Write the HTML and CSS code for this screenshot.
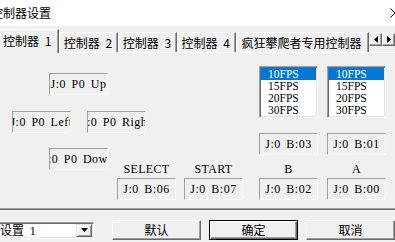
FILE: index.html
```html
<!DOCTYPE html>
<html lang="zh">
<head>
    <meta charset="UTF-8">
    <title>控制器设置</title>
    <link rel="stylesheet" href="styles.css">
</head>
<body>
    <div class="titlebar">
        <span class="title">控制器设置</span>
        <svg class="close" width="10" height="10" viewBox="0 0 10 10">
            <path d="M0.5 0.5 L9.5 9.5 M9.5 0.5 L0.5 9.5" stroke="#000" stroke-width="1"/>
        </svg>
    </div>

    <!-- Tabs -->
    <div class="tabs">
        <div class="tab tab-active tab-1">控制器 1</div>
        <div class="tab tab-2">控制器 2</div>
        <div class="tab tab-3">控制器 3</div>
        <div class="tab tab-4">控制器 4</div>
        <div class="tab tab-5">疯狂攀爬者专用控制器</div>
        <div class="spin">
            <span class="spin-btn">
                <svg width="4" height="7" viewBox="0 0 4 7"><path d="M4 0 L0 3.5 L4 7 Z" fill="#000"/></svg>
            </span>
            <span class="spin-btn">
                <svg width="4" height="7" viewBox="0 0 4 7"><path d="M0 0 L4 3.5 L0 7 Z" fill="#000"/></svg>
            </span>
        </div>
    </div>

    <div class="panel">
        <div class="dpad">
            <div class="box box-up">J:0 P0 Up</div>
            <div class="dpad-row">
                <div class="box">J:0 P0 Left</div>
                <div class="box">J:0 P0 Right</div>
            </div>
            <div class="box box-down">J:0 P0 Down</div>
        </div>

        <div class="group group-mid">
            <div class="col">
                <div class="label">SELECT</div>
                <div class="box">J:0 B:06</div>
            </div>
            <div class="col">
                <div class="label">START</div>
                <div class="box">J:0 B:07</div>
            </div>
        </div>

        <div class="group group-right">
            <div class="col">
                <div class="listbox">
                    <div class="item item-selected">10FPS</div>
                    <div class="item">15FPS</div>
                    <div class="item">20FPS</div>
                    <div class="item">30FPS</div>
                </div>
                <div class="box box-turbo">J:0 B:03</div>
                <div class="label">B</div>
                <div class="box">J:0 B:02</div>
            </div>
            <div class="col">
                <div class="listbox">
                    <div class="item item-selected">10FPS</div>
                    <div class="item">15FPS</div>
                    <div class="item">20FPS</div>
                    <div class="item">30FPS</div>
                </div>
                <div class="box box-turbo">J:0 B:01</div>
                <div class="label">A</div>
                <div class="box">J:0 B:00</div>
            </div>
        </div>
    </div>

    <div class="footer">
        <div class="combo">
            <span class="combo-text">设置 <span class="num">1</span></span>
            <span class="combo-btn">
                <svg width="7" height="4" viewBox="0 0 7 4"><path d="M0 0 L7 0 L3.5 4 Z" fill="#000"/></svg>
            </span>
        </div>
        <div class="buttons">
            <button class="btn">默认</button>
            <button class="btn btn-default">确定</button>
            <button class="btn">取消</button>
        </div>
    </div>
</body>
</html>
```

FILE: styles.css
```css
body {
    margin: 0;
    width: 395px;
    height: 242px;
    overflow: hidden;
    background-color: #f0f0f0;
    font-family: "Noto Sans CJK SC", sans-serif;
    font-size: 12px;
    color: #000;
}
.titlebar {
    height: 26px;
    background-color: #ffffff;
    display: flex;
    align-items: center;
    justify-content: space-between;
}
.title {
    margin-left: -9px;
    line-height: 12px;
}
.close {
    margin-right: -5px;
}
.num {
    font-family: "Liberation Serif", serif;
    margin-left: 3px;
}

/* tab strip */
.tabs {
    display: flex;
    align-items: flex-end;
    height: 26px;
}
.tab {
    box-sizing: border-box;
    height: 20px;
    padding-left: 4px;
    display: flex;
    align-items: center;
    white-space: nowrap;
    word-spacing: 3px;
    border-top: 1px solid #ffffff;
    border-left: 1px solid #ffffff;
    border-right: 1px solid #696969;
    box-shadow: inset -1px 0 0 #a0a0a0;
    line-height: 14px;
}
.tab-active {
    position: relative;
    z-index: 1;
    height: 24px;
    margin-bottom: -1px;
    padding-bottom: 2px;
    background-color: #f0f0f0;
}
.tab-1 { width: 61px; margin-left: -2px; }
.tab-2 { width: 59px; }
.tab-3 { width: 59px; }
.tab-4 { width: 60px; }
.tab-5 { width: 133px; }
.spin {
    display: flex;
    margin-bottom: 6px;
}
.spin-btn {
    box-sizing: border-box;
    width: 13px;
    height: 13px;
    display: flex;
    align-items: center;
    justify-content: center;
    border-top: 1px solid #ffffff;
    border-left: 1px solid #ffffff;
    border-right: 1px solid #696969;
    border-bottom: 1px solid #696969;
    box-shadow: inset -1px -1px 0 #a0a0a0;
}

/* panel */
.panel {
    height: 155px;
    border-top: 1px solid #ffffff;
    border-bottom: 1px solid #a0a0a0;
    box-shadow: 0 1px 0 #696969;
    padding-left: 12px;
    display: flex;
    align-items: flex-start;
}
.box {
    box-sizing: border-box;
    width: 59px;
    height: 22px;
    display: flex;
    align-items: center;
    justify-content: center;
    overflow: hidden;
    white-space: nowrap;
    border-top: 1px solid #a0a0a0;
    border-left: 1px solid #a0a0a0;
    border-right: 1px solid #ffffff;
    border-bottom: 1px solid #ffffff;
    font-family: "Liberation Serif", serif;
    font-size: 12px;
    letter-spacing: 0.5px;
    word-spacing: 2px;
}
.dpad {
    width: 134px;
    margin-top: 20px;
    display: flex;
    flex-direction: column;
}
.box-up, .box-down {
    margin-left: 37px;
}
.dpad-row {
    display: flex;
    gap: 16px;
    margin: 16px 0 15px;
}
.group {
    display: flex;
}
.group-mid {
    margin-left: -29px;
    margin-top: 109px;
    gap: 8px;
}
.group-right {
    margin-left: 16px;
    margin-top: 13px;
    gap: 9px;
}
.col {
    display: flex;
    flex-direction: column;
    width: 59px;
}
.label {
    height: 14px;
    line-height: 14px;
    margin-bottom: 2px;
    text-align: center;
    font-family: "Liberation Serif", serif;
    font-size: 12px;
    letter-spacing: 0.3px;
}
.box-turbo {
    margin-top: 15px;
    margin-bottom: 7px;
}
.listbox {
    box-sizing: border-box;
    width: 59px;
    height: 52px;
    background-color: #ffffff;
    border-top: 1px solid #a0a0a0;
    border-left: 1px solid #a0a0a0;
    border-right: 1px solid #ffffff;
    border-bottom: 1px solid #ffffff;
    box-shadow: inset 1px 1px 0 #696969, inset -1px -1px 0 #e3e3e3;
    padding: 1px;
}
.item {
    height: 12px;
    line-height: 12px;
    padding-left: 7px;
    font-family: "Liberation Serif", serif;
    font-size: 11.5px;
}
.item-selected {
    background-color: #0078d7;
    color: #ffffff;
}

/* bottom row */
.footer {
    display: flex;
    align-items: center;
    margin-top: 11px;
}
.combo {
    box-sizing: border-box;
    width: 119px;
    height: 17px;
    margin-left: -20px;
    background-color: #ffffff;
    border-top: 1px solid #a0a0a0;
    border-left: 1px solid #a0a0a0;
    border-right: 1px solid #ffffff;
    border-bottom: 1px solid #ffffff;
    box-shadow: inset 1px 1px 0 #696969, inset -1px -1px 0 #e3e3e3;
    display: flex;
    align-items: center;
    justify-content: space-between;
    padding: 1px 1px 1px 19px;
}
.combo-text {
    line-height: 12px;
}
.combo-btn {
    box-sizing: border-box;
    width: 16px;
    height: 13px;
    display: flex;
    align-items: center;
    justify-content: center;
    background-color: #f0f0f0;
    border-top: 1px solid #e3e3e3;
    border-left: 1px solid #e3e3e3;
    border-right: 1px solid #696969;
    border-bottom: 1px solid #696969;
    box-shadow: inset 1px 1px 0 #ffffff, inset -1px -1px 0 #a0a0a0;
}
.buttons {
    display: flex;
    gap: 8px;
    margin-left: 18px;
}
.btn {
    box-sizing: border-box;
    width: 89px;
    height: 20px;
    padding: 0;
    background-color: #f0f0f0;
    font-family: "Noto Sans CJK SC", sans-serif;
    font-size: 12px;
    line-height: 12px;
    color: #000;
    border-top: 1px solid #ffffff;
    border-left: 1px solid #ffffff;
    border-right: 1px solid #696969;
    border-bottom: 1px solid #696969;
    box-shadow: inset -1px -1px 0 #a0a0a0;
}
.btn-default {
    border: 1px solid #000;
    box-shadow: inset 1px 1px 0 #ffffff, inset -1px -1px 0 #696969, inset -2px -2px 0 #a0a0a0;
}
```
